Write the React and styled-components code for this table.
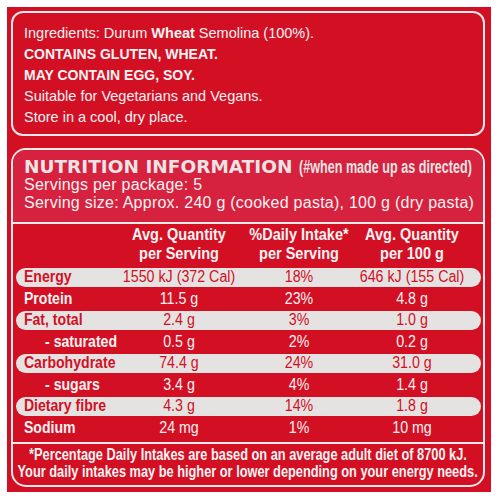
import React from "react";
import styled, { createGlobalStyle } from "styled-components";

const red = "#d30f24";
const pink = "#d6213f";
const line = "#f1eaea";

const rows = [
  { name: "Energy", serve: "1550 kJ (372 Cal)", di: "18%", per100: "646 kJ (155 Cal)", pill: true },
  { name: "Protein", serve: "11.5 g", di: "23%", per100: "4.8 g" },
  { name: "Fat, total", serve: "2.4 g", di: "3%", per100: "1.0 g", pill: true },
  { name: "- saturated", serve: "0.5 g", di: "2%", per100: "0.2 g", sub: true },
  { name: "Carbohydrate", serve: "74.4 g", di: "24%", per100: "31.0 g", pill: true },
  { name: "- sugars", serve: "3.4 g", di: "4%", per100: "1.4 g", sub: true },
  { name: "Dietary fibre", serve: "4.3 g", di: "14%", per100: "1.8 g", pill: true },
  { name: "Sodium", serve: "24 mg", di: "1%", per100: "10 mg" },
];

const App = () => {
  return (
    <>
      <GlobalStyle />
      <Panel>
        <InfoBox>
          <div>
            Ingredients: Durum <b>Wheat</b> Semolina (100%).
          </div>
          <Strong>CONTAINS GLUTEN, WHEAT.</Strong>
          <Strong>MAY CONTAIN EGG, SOY.</Strong>
          <div>Suitable for Vegetarians and Vegans.</div>
          <div>Store in a cool, dry place.</div>
        </InfoBox>

        <NutritionBox>
          <Heading>
            <Title>
              NUTRITION INFORMATION <Narrow>(#when made up as directed)</Narrow>
            </Title>
            <Serving>Servings per package: 5</Serving>
            <Serving>
              Serving size: Approx. 240 g (cooked pasta), 100 g (dry pasta)
            </Serving>
          </Heading>

          <Table>
            <HeadRow>
              <span />
              <HeadCell>
                <span>Avg. Quantity</span>
                <span>per Serving</span>
              </HeadCell>
              <HeadCell>
                <span>%Daily Intake*</span>
                <span>per Serving</span>
              </HeadCell>
              <HeadCell>
                <span>Avg. Quantity</span>
                <span>per 100 g</span>
              </HeadCell>
            </HeadRow>
            <Rows>
              {rows.map((r) => (
                <Row key={r.name} $pill={r.pill}>
                  <Label $sub={r.sub}>{r.name}</Label>
                  <Value>{r.serve}</Value>
                  <Value>{r.di}</Value>
                  <Value>{r.per100}</Value>
                </Row>
              ))}
            </Rows>
          </Table>

          <Footnote>
            <NoteLine>
              *Percentage Daily Intakes are based on an average adult diet of 8700 kJ.
            </NoteLine>
            <NoteLine>
              Your daily intakes may be higher or lower depending on your energy needs.
            </NoteLine>
          </Footnote>
        </NutritionBox>
      </Panel>
    </>
  );
};

export default App;

const GlobalStyle = createGlobalStyle`
  body {
    margin: 0;
    background: #ffffff;
    font-family: "Liberation Sans", Arial, sans-serif;
  }
`;

const Panel = styled.div`
  margin: 7px 0 0 7px;
  width: 484px;
  height: 485px;
  box-sizing: border-box;
  padding: 4px 6px 5px 4px;
  background: ${red};
  display: flex;
  flex-direction: column;
  gap: 12px;
`;

const InfoBox = styled.div`
  height: 125px;
  box-sizing: border-box;
  border: 2px solid ${line};
  border-radius: 12px;
  padding: 10px 11px;
  font-size: 14.5px;
  line-height: 21px;
  color: #fbf3f3;

  b {
    font-weight: 700;
  }
`;

const Strong = styled.div`
  font-weight: 700;
  font-size: 14px;
`;

const NutritionBox = styled.div`
  height: 339px;
  box-sizing: border-box;
  border: 2px solid ${line};
  border-radius: 15px;
  overflow: hidden;
  display: flex;
  flex-direction: column;
  color: #fbf3f3;
`;

const Heading = styled.div`
  background: ${pink};
  padding: 8px 11px 10px;
  border-bottom: 2px solid ${line};
`;

const Title = styled.div`
  font-family: "DejaVu Sans", sans-serif;
  font-weight: 700;
  font-size: 18.5px;
  line-height: 17px;
  color: #ebe4e4;
  white-space: nowrap;
`;

/* no condensed face installed, so the bold face is squeezed horizontally */
const Narrow = styled.span`
  display: inline-block;
  font-family: "Liberation Sans", sans-serif;
  font-size: 17.5px;
  font-weight: 700;
  transform: scaleX(0.72);
  transform-origin: left center;
`;

const Serving = styled.div`
  font-size: 16px;
  line-height: 18px;
  letter-spacing: 0.25px;
  white-space: nowrap;
`;

const Table = styled.div`
  padding-top: 1px;
`;

const grid = `
  display: grid;
  grid-template-columns: 106px 114px 126px 100px 1fr;
  margin: 0 2px 0 3px;
`;

const HeadRow = styled.div`
  ${grid}
  font-weight: 700;
  font-size: 16.5px;
  line-height: 19px;
`;

const HeadCell = styled.div`
  display: flex;
  flex-direction: column;
  align-items: center;
  white-space: nowrap;
  transform: scaleX(0.88);
`;

const Rows = styled.div`
  display: flex;
  flex-direction: column;
  gap: 2.57px;
  padding: 4.5px 0 4.5px;
`;

const Row = styled.div`
  ${grid}
  height: 19px;
  align-items: center;
  border-radius: 10px;
  background: ${(p) => (p.$pill ? "#e5e2e2" : "transparent")};
  color: ${(p) => (p.$pill ? red : "#fbf3f3")};
  font-size: 16px;
`;

const Label = styled.span`
  font-weight: 700;
  padding-left: ${(p) => (p.$sub ? "33px" : "9px")};
  white-space: nowrap;
  transform: scaleX(0.88);
  transform-origin: left center;
`;

const Value = styled.span`
  display: flex;
  justify-content: center;
  white-space: nowrap;
  transform: scaleX(0.89);
`;

const Footnote = styled.div`
  flex: 1;
  border-top: 2px solid ${line};
  padding-top: 2px;
  display: flex;
  flex-direction: column;
  align-items: center;
`;

const NoteLine = styled.div`
  font-weight: 700;
  font-size: 15.6px;
  line-height: 17px;
  white-space: nowrap;
  transform: scaleX(0.82);
  transform-origin: center;
`;
